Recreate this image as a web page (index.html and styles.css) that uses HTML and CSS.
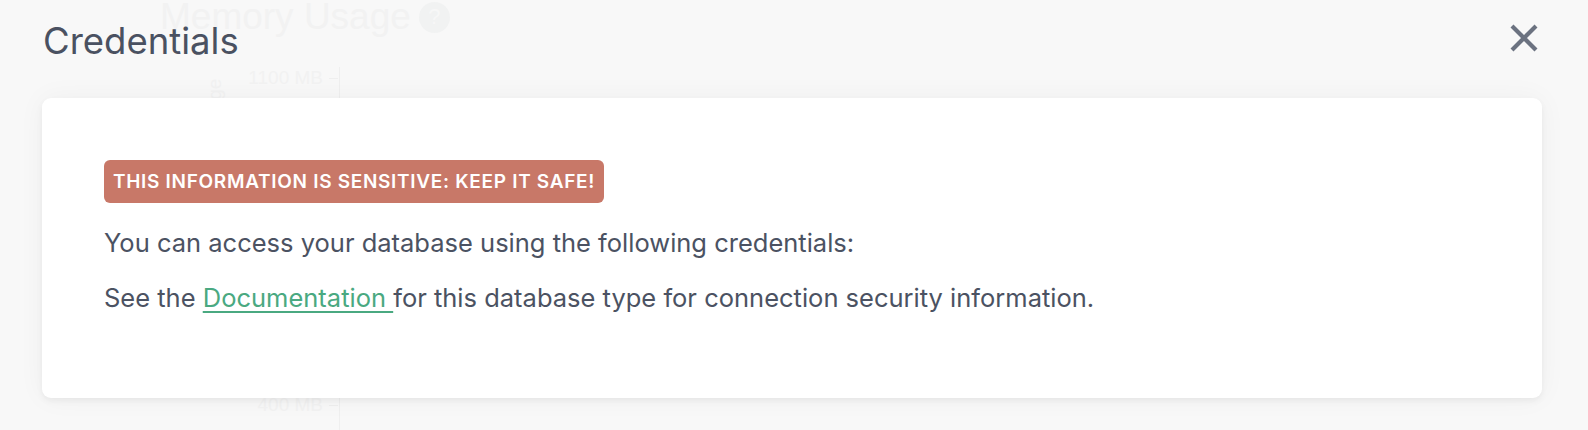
FILE: index.html
```html
<!DOCTYPE html>
<html lang="en">
<head>
<meta charset="utf-8">
<title>Credentials</title>
<link rel="stylesheet" href="styles.css">
</head>
<body>
<div class="page">
  <div class="backdrop" aria-hidden="true">
    <div class="bg-title">Memory Usage <span class="bg-help">?</span></div>
    <div class="bg-axis-label">Memory Usage</div>
    <div class="bg-tick bg-tick-top">1100 MB</div>
    <div class="bg-tick bg-tick-bottom">400 MB</div>
    <div class="bg-axis-line"></div>
  </div>
  <div class="modal">
    <div class="modal-header">
      <h1 class="modal-title">Credentials</h1>
      <button class="close-btn" aria-label="Close">
        <svg viewBox="0 0 28 28" width="28" height="28"><path d="M2 2 L26 26 M26 2 L2 26" stroke="currentColor" stroke-width="4.2" stroke-linecap="butt" fill="none"/></svg>
      </button>
    </div>
    <div class="card">
      <span class="badge">This information is sensitive: keep it safe!</span>
      <p class="text">You can access your database using the following credentials:</p>
      <p class="text">See the <a class="link" href="#">Documentation </a>for this database type for connection security information.</p>
    </div>
  </div>
</div>
</body>
</html>
```
FILE: styles.css
```css
html, body {
  margin: 0;
  padding: 0;
}
body {
  background: #f8f8f8;
  font-family: Inter, "Noto Sans", "Liberation Sans", sans-serif;
  color: #4b5262;
  width: 1588px;
  height: 430px;
  overflow: hidden;
}
.page {
  position: relative;
  width: 1588px;
  height: 430px;
}
.backdrop {
  position: absolute;
  inset: 0;
  color: #f2f2f2;
  font-family: "Liberation Sans", Arial, sans-serif;
}
.bg-title {
  position: absolute;
  left: 160px;
  top: -4px;
  font-size: 37px;
  display: flex;
  align-items: center;
  gap: 8px;
}
.bg-help {
  display: inline-flex;
  width: 31px;
  height: 31px;
  border-radius: 50%;
  background: #f1f2f2;
  color: #f7f7f7;
  font-size: 22px;
  align-items: center;
  justify-content: center;
}
.bg-axis-label {
  position: absolute;
  left: 150px;
  top: 132px;
  width: 130px;
  text-align: center;
  font-size: 19px;
  transform: rotate(-90deg);
}
.bg-tick {
  position: absolute;
  right: 1250px;
  font-size: 19px;
  display: flex;
  align-items: center;
  gap: 6px;
}
.bg-tick::after {
  content: "";
  width: 9px;
  height: 1px;
  background: #efefef;
}
.bg-tick-top { top: 67px; }
.bg-tick-bottom { top: 394px; }
.bg-axis-line {
  position: absolute;
  left: 339px;
  top: 67px;
  width: 1px;
  height: 370px;
  background: #efefef;
}
.modal {
  position: relative;
  padding: 17px 46px 0 42px;
}
.modal-header {
  display: flex;
  justify-content: space-between;
  align-items: flex-start;
  height: 81px;
}
.modal-title {
  margin: 0;
  font-size: 36.5px;
  line-height: 48px;
  font-weight: 400;
  color: #4a5161;
  padding-left: 1px;
}
.close-btn {
  border: 0;
  background: none;
  padding: 0;
  margin-top: 7px;
  margin-right: 4px;
  color: #6b7280;
  width: 28px;
  height: 28px;
  display: block;
}
.close-btn svg { display: block; }
.card {
  background: #fff;
  border-radius: 9px;
  height: 300px;
  box-sizing: border-box;
  padding: 62px 62px 0 62px;
  box-shadow: 0 3px 6px rgba(0,0,0,0.05), 0 0 28px rgba(0,0,0,0.045);
}
.badge {
  display: inline-block;
  background: #c87868;
  color: #fff;
  text-transform: uppercase;
  font-size: 19px;
  letter-spacing: 0.7px;
  line-height: 25px;
  font-weight: 600;
  padding: 9px 9px;
  border-radius: 6px;
}
.text {
  margin: 22px 0 0 0;
  font-size: 25.5px;
  line-height: 36px;
}
.text + .text {
  margin-top: 19px;
}
.link {
  color: #4aa981;
  text-decoration: underline;
  text-underline-offset: 4px;
  text-decoration-thickness: 2px;
}
```
